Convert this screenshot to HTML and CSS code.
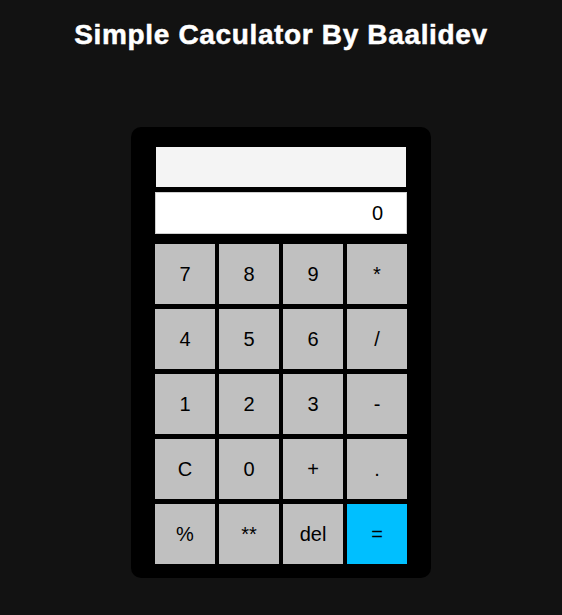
FILE: index.html
```html
<!DOCTYPE html>
<html>
<head>
<meta charset="utf-8">
<link rel="stylesheet" href="styles.css">
</head>
<body>
<h1 class="title">Simple Caculator By Baalidev</h1>
<div class="calc">
  <div class="screens">
    <div class="history"></div>
    <div class="output">0</div>
  </div>
  <div class="keys">
    <button class="key">7</button>
    <button class="key">8</button>
    <button class="key">9</button>
    <button class="key">*</button>
    <button class="key">4</button>
    <button class="key">5</button>
    <button class="key">6</button>
    <button class="key">/</button>
    <button class="key">1</button>
    <button class="key">2</button>
    <button class="key">3</button>
    <button class="key">-</button>
    <button class="key">C</button>
    <button class="key">0</button>
    <button class="key">+</button>
    <button class="key">.</button>
    <button class="key">%</button>
    <button class="key">**</button>
    <button class="key">del</button>
    <button class="key equals">=</button>
  </div>
</div>
</body>
</html>
```
FILE: styles.css
```css
html, body {
  margin: 0;
  padding: 0;
  background: #121212;
}
body {
  display: flex;
  flex-direction: column;
  align-items: center;
  font-family: "Liberation Sans", Arial, sans-serif;
}
.title {
  margin: 19px 0 0 0;
  font-size: 28px;
  line-height: 32px;
  font-weight: bold;
  letter-spacing: 0.65px;
  -webkit-text-stroke: 0.5px #ffffff;
  color: #ffffff;
}
.calc {
  margin-top: 76px;
  width: 300px;
  box-sizing: border-box;
  padding: 20px 24px 14px 24px;
  background: #000000;
  border-radius: 10px;
  display: flex;
  flex-direction: column;
  gap: 10px;
}
.screens {
  display: flex;
  flex-direction: column;
  gap: 5px;
}
.history {
  margin: 0 1px;
  height: 40px;
  background: #f4f4f4;
}
.output {
  height: 42px;
  box-sizing: border-box;
  border: 1px solid #cfcfcf;
  background: #ffffff;
  color: #000;
  font-size: 20px;
  display: flex;
  align-items: center;
  justify-content: flex-end;
  padding-right: 23px;
}
.keys {
  display: grid;
  grid-template-columns: repeat(4, 60px);
  grid-auto-rows: 60px;
  column-gap: 4px;
  row-gap: 5px;
}
.key {
  border: none;
  margin: 0;
  padding: 0;
  background: #c0c0c0;
  color: #000;
  font-family: "Liberation Sans", Arial, sans-serif;
  font-size: 20px;
}
.equals {
  background: #00bfff;
}
```
